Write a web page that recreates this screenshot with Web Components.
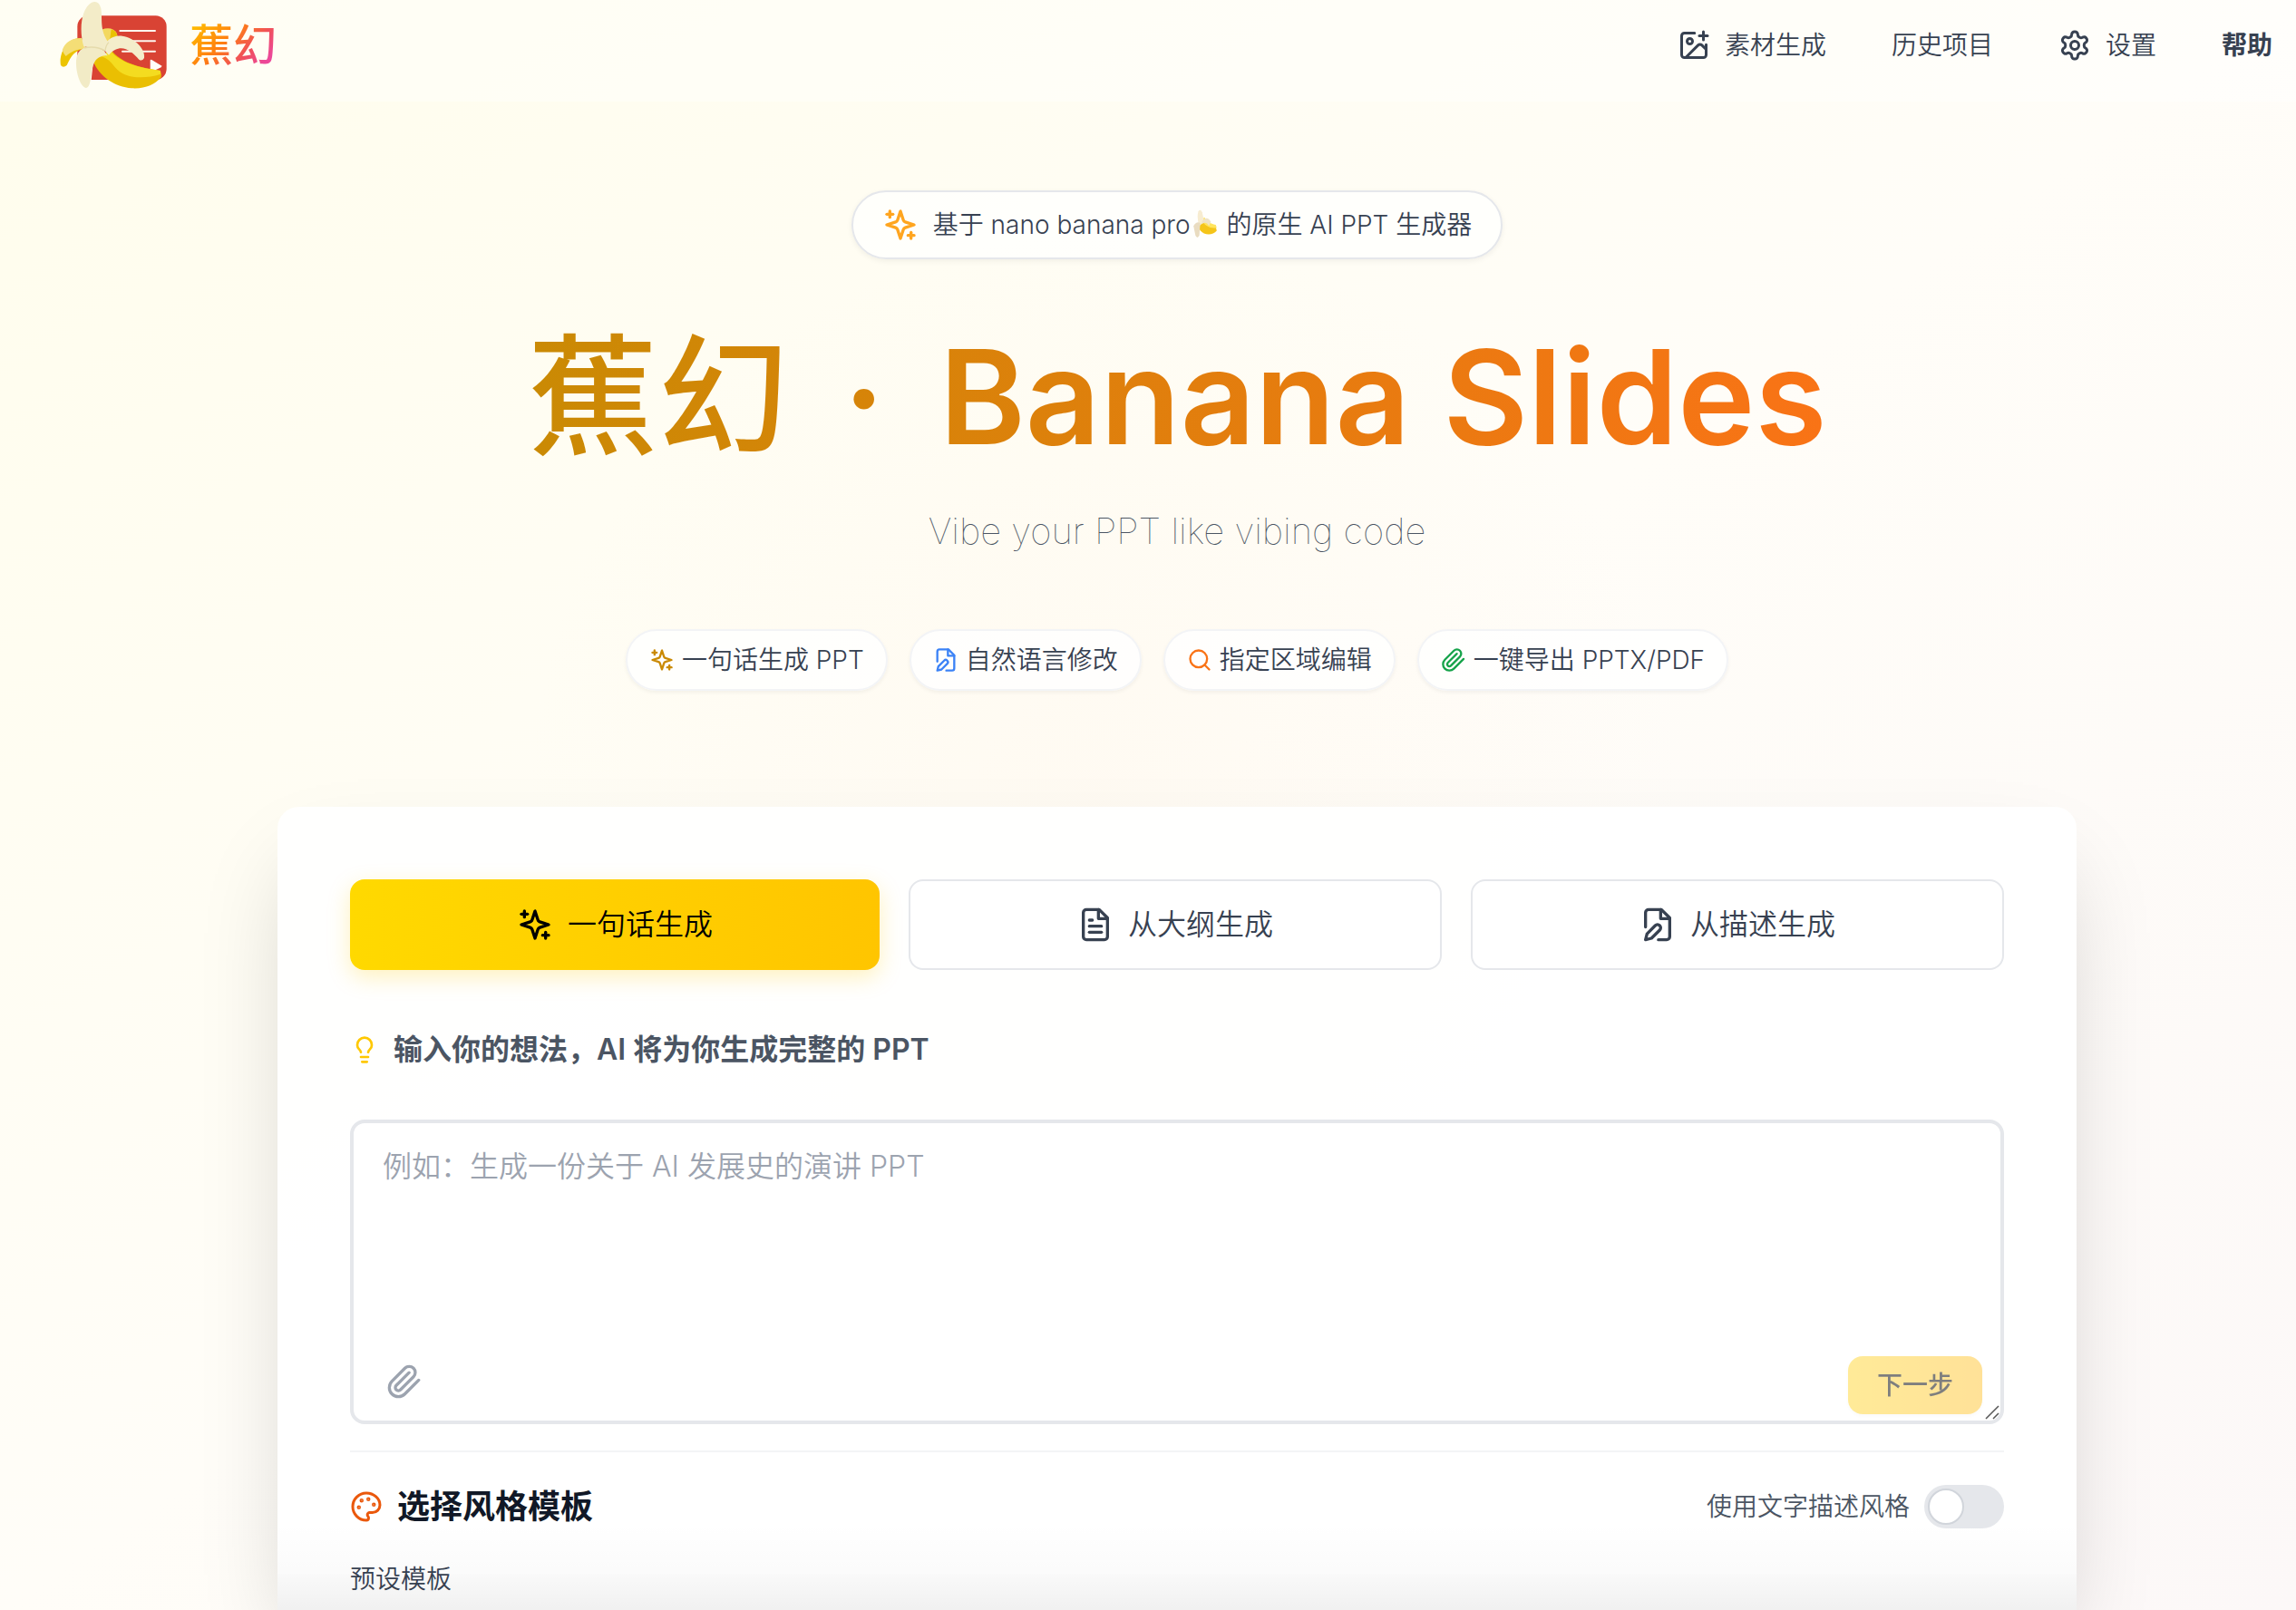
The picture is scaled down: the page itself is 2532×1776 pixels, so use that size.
<!DOCTYPE html>
<html lang="zh-CN">
<head>
<meta charset="UTF-8">
<meta name="viewport" content="width=device-width, initial-scale=1">
<title>蕉幻 · Banana Slides</title>
<style>
  :root {
    --text-primary: #111827;
    --text-secondary: #374151;
    --text-tertiary: #4b5563;
    --border-color: #e5e7eb;
    --border-light: #f3f4f6;
  }

  body {
    margin: 0;
    font-family: Inter, "Noto Sans CJK SC", sans-serif;
    font-size: 28px;
    font-weight: 350;
    line-height: 40px;
    color: var(--text-secondary);
  }
</style>
</head>
<body>
<home-page></home-page>

<script>
// Outline icons on a 24x24 grid
const ICONS = {
  sparkles: '<path d="m12 3-1.912 5.813a2 2 0 0 1-1.275 1.275L3 12l5.813 1.912a2 2 0 0 1 1.275 1.275L12 21l1.912-5.813a2 2 0 0 1 1.275-1.275L21 12l-5.813-1.912a2 2 0 0 1-1.275-1.275L12 3Z"/><path d="M5 3v4"/><path d="M19 17v4"/><path d="M3 5h4"/><path d="M17 19h4"/>',
  imagePlus: '<path d="M16 5h6"/><path d="M19 2v6"/><path d="M21 11.5V19a2 2 0 0 1-2 2H5a2 2 0 0 1-2-2V5a2 2 0 0 1 2-2h7.5"/><path d="m21 15-3.086-3.086a2 2 0 0 0-2.828 0L6 21"/><circle cx="9" cy="9" r="2"/>',
  settings: '<path d="M12.22 2h-.44a2 2 0 0 0-2 2v.18a2 2 0 0 1-1 1.73l-.43.25a2 2 0 0 1-2 0l-.15-.08a2 2 0 0 0-2.73.73l-.22.38a2 2 0 0 0 .73 2.73l.15.1a2 2 0 0 1 1 1.72v.51a2 2 0 0 1-1 1.74l-.15.09a2 2 0 0 0-.73 2.73l.22.38a2 2 0 0 0 2.73.73l.15-.08a2 2 0 0 1 2 0l.43.25a2 2 0 0 1 1 1.73V20a2 2 0 0 0 2 2h.44a2 2 0 0 0 2-2v-.18a2 2 0 0 1 1-1.73l.43-.25a2 2 0 0 1 2 0l.15.08a2 2 0 0 0 2.73-.73l.22-.39a2 2 0 0 0-.73-2.73l-.15-.08a2 2 0 0 1-1-1.74v-.5a2 2 0 0 1 1-1.74l.15-.09a2 2 0 0 0 .73-2.73l-.22-.38a2 2 0 0 0-2.73-.73l-.15.08a2 2 0 0 1-2 0l-.43-.25a2 2 0 0 1-1-1.73V4a2 2 0 0 0-2-2z"/><circle cx="12" cy="12" r="3"/>',
  fileText: '<path d="M14.5 2H6a2 2 0 0 0-2 2v16a2 2 0 0 0 2 2h12a2 2 0 0 0 2-2V7.5L14.5 2z"/><path d="M14 2v6h6"/><path d="M16 13H8"/><path d="M16 17H8"/><path d="M10 9H8"/>',
  fileEdit: '<path d="M4 13.5V4a2 2 0 0 1 2-2h8.5L20 7.5V20a2 2 0 0 1-2 2h-5.5"/><path d="M14 2v6h6"/><path d="M10.42 12.61a2.1 2.1 0 1 1 2.97 2.97L7.95 21 4 22l.99-3.95 5.43-5.44Z"/>',
  search: '<circle cx="11" cy="11" r="8"/><path d="m21 21-4.3-4.3"/>',
  paperclip: '<path d="m21.44 11.05-9.19 9.19a6 6 0 0 1-8.49-8.49l8.57-8.57A4 4 0 1 1 18 8.84l-8.59 8.57a2 2 0 0 1-2.83-2.83l8.49-8.48"/>',
  lightbulb: '<path d="M15 14c.2-1 .7-1.7 1.5-2.5 1-.9 1.5-2.2 1.5-3.5A6 6 0 0 0 6 8c0 1 .2 2.2 1.5 3.5.7.7 1.3 1.5 1.5 2.5"/><path d="M9 18h6"/><path d="M10 22h4"/>',
  palette: '<circle cx="13.5" cy="6.5" r=".5" fill="currentColor"/><circle cx="17.5" cy="10.5" r=".5" fill="currentColor"/><circle cx="8.5" cy="7.5" r=".5" fill="currentColor"/><circle cx="6.5" cy="12.5" r=".5" fill="currentColor"/><path d="M12 2C6.5 2 2 6.5 2 12s4.5 10 10 10c.926 0 1.648-.746 1.648-1.688 0-.437-.18-.835-.437-1.125-.29-.289-.438-.652-.438-1.125a1.64 1.64 0 0 1 1.668-1.668h1.996c3.051 0 5.555-2.503 5.555-5.554C21.965 6.012 17.461 2 12 2z"/>'
};

function define(name, html) {
  customElements.define(name, class extends HTMLElement {
    constructor() {
      super();
      this.attachShadow({ mode: 'open' }).innerHTML = html;
    }
  });
}

class UiIcon extends HTMLElement {
  connectedCallback() {
    if (!this.shadowRoot) this.attachShadow({ mode: 'open' });
    const size = this.getAttribute('size') || 40;
    this.shadowRoot.innerHTML = `
      <style>
        :host { display: block; flex: none; }
        svg { display: block; }
      </style>
      <svg width="${size}" height="${size}" viewBox="0 0 24 24" fill="none" stroke="currentColor"
        stroke-width="2" stroke-linecap="round" stroke-linejoin="round" aria-hidden="true">${ICONS[this.getAttribute('name')]}</svg>
    `;
  }
}
customElements.define('ui-icon', UiIcon);

define('banana-logo', `
  <style>
    :host { display: block; flex: none; }
    svg { display: block; }
  </style>
  <svg width="122" height="100" viewBox="15 0 366 300" role="img" aria-label="Banana Slides">
    <rect x="76" y="52" width="295" height="212" rx="36" fill="#d94334"/>
    <path d="M217 102H333M220 136H333M225 170H333" stroke="#fdf6ee" stroke-width="6" stroke-linecap="round"/>
    <path d="M317 200q0-4 5-2l31 19q4 3 0 6l-30 14q-6 2-6-4z" fill="#fffefa"/>
    <path d="M74 188L130 188L122 266L104 266L74 220z" fill="#fffef5"/>
    <path d="M21 216C14 182 38 122 90 126L104 160C68 166 56 184 41 216Q29 226 21 216z" fill="#ecc400"/>
    <path d="M26 166C36 138 58 126 90 126L104 160C70 164 58 170 38 186Q30 178 26 166z" fill="#f4de76"/>
    <path d="M156 98Q178 90 195 98Q208 106 209 122L184 144L160 136z" fill="#f3d860"/>
    <path d="M188 97Q208 102 208 124L180 146Q186 118 188 97z" fill="#e9c200"/>
    <path d="M128 202C150 176 172 186 188 166C220 206 270 222 349 234Q356 246 353 256C330 282 302 294 256 292C200 288 148 254 128 202z" fill="#eabf02"/>
    <path d="M180 162C210 202 266 224 350 233Q354 240 350 246C296 262 232 262 200 222C182 198 166 188 150 187Q170 184 180 162z" fill="#f4dc20"/>
    <path d="M97 154C80 96 90 28 122 9Q146 -2 154 28C160 62 148 100 180 142L168 166z" fill="#f3ecc8"/>
    <path d="M98 158Q134 150 164 168L176 184C136 184 128 206 121 252C118 276 114 291 104 291C86 286 70 240 72 200Q74 168 98 158z" fill="#f2ebc6"/>
    <path d="M165 166C164 136 190 116 224 119C270 126 302 166 297 192Q290 204 280 197C252 164 216 140 180 182z" fill="#f4edcb"/>
    <path d="M98 159Q136 150 168 168Q170 148 180 140" fill="none" stroke="#e5dbac" stroke-width="4"/>
  </svg>
`);

define('nav-bar', `
  <style>
    :host { display: block; }
    header {
      display: flex;
      align-items: center;
      justify-content: space-between;
      height: 112px;
      padding: 0 26px 0 65px;
      box-sizing: border-box;
      background: rgba(255, 255, 255, 0.4);
    }
    .brand {
      display: flex;
      align-items: center;
      gap: 22px;
      padding-bottom: 12px;
      text-decoration: none;
    }
    .name {
      font-size: 48px;
      font-weight: 500;
      line-height: 56px;
      background: linear-gradient(135deg, #ffb800 10%, #ff8010 40%, #f0505a 65%, #ec4899 85%);
      -webkit-background-clip: text;
      background-clip: text;
      color: transparent;
    }
    nav {
      display: flex;
      gap: 72px;
      padding-bottom: 12px;
    }
    button {
      display: flex;
      align-items: center;
      gap: 16px;
      padding: 0;
      border: 0;
      background: none;
      font: inherit;
      color: #374151;
      cursor: pointer;
    }
    .help { font-weight: 600; }
  </style>
  <header>
    <a class="brand" href="#">
      <banana-logo></banana-logo>
      <span class="name">蕉幻</span>
    </a>
    <nav>
      <button type="button"><ui-icon name="imagePlus" size="36"></ui-icon>素材生成</button>
      <button type="button">历史项目</button>
      <button type="button"><ui-icon name="settings" size="36"></ui-icon>设置</button>
      <button type="button" class="help">帮助</button>
    </nav>
  </header>
`);

define('feature-pill', `
  <style>
    :host {
      display: flex;
      align-items: center;
      gap: 8px;
      padding: 12px 24px;
      border: 2px solid var(--border-light);
      border-radius: 40px;
      background: rgba(255, 255, 255, 0.8);
      box-shadow: 0 2px 4px rgba(0, 0, 0, 0.05);
      white-space: nowrap;
    }
  </style>
  <slot name="icon"></slot>
  <span><slot></slot></span>
`);

define('hero-section', `
  <style>
    :host {
      display: flex;
      flex-direction: column;
      align-items: center;
      text-align: center;
    }
    .badge {
      display: flex;
      align-items: center;
      gap: 16px;
      padding: 16px 32px;
      border: 2px solid var(--border-color);
      border-radius: 40px;
      background: rgba(255, 255, 255, 0.7);
      box-shadow: 0 2px 6px rgba(0, 0, 0, 0.06);
    }
    .emoji {
      width: 28px;
      height: 32px;
      margin: 0 2px;
      vertical-align: -5px;
    }
    h1 {
      margin: 80px 0 0;
      font-size: 144px;
      font-weight: 500;
      line-height: 144px;
      background: linear-gradient(to right, #ca8a04, #f97316);
      -webkit-background-clip: text;
      background-clip: text;
      color: transparent;
    }
    .dot { margin: 0 24px; }
    .latin { font-weight: 600; }
    .subtitle {
      margin: 48px 0 0;
      font-size: 40px;
      font-weight: 100;
      line-height: 56px;
      color: #4b5563;
    }
    .features {
      display: flex;
      flex-wrap: wrap;
      justify-content: center;
      gap: 24px;
      margin-top: 80px;
    }
  </style>
  <div class="badge">
    <ui-icon name="sparkles" size="40" style="color: #ffa51f"></ui-icon>
    <span>基于 nano banana pro<svg class="emoji" viewBox="0 0 26 30" role="img" aria-label="🍌"><path d="M6 18C9 27 20 28 25 22L24 18C18 18 13 15 10 10z" fill="#f5c518"/><path d="M10 12C13 17 18 20 25 19L24 16C18 15 15 12 12 8z" fill="#ffe45c"/><path d="M6 2Q8-1 10 3L12 13L7 17Q4 8 6 2z" fill="#f7ecd0"/><path d="M1 17Q4 12 8 14L7 27Q5 31 3 27z" fill="#e9dcc0"/><path d="M10 12Q15 6 19 13L17 17Q14 12 10 15z" fill="#efe3c4"/></svg> 的原生 AI PPT 生成器</span>
  </div>
  <h1>蕉幻<span class="latin"> <span class="dot">·</span> Banana Slides</span></h1>
  <p class="subtitle">Vibe your PPT like vibing code</p>
  <div class="features">
    <feature-pill><ui-icon slot="icon" name="sparkles" size="28" style="color: #ca8a04"></ui-icon>一句话生成 PPT</feature-pill>
    <feature-pill><ui-icon slot="icon" name="fileEdit" size="28" style="color: #3b82f6"></ui-icon>自然语言修改</feature-pill>
    <feature-pill><ui-icon slot="icon" name="search" size="28" style="color: #f97316"></ui-icon>指定区域编辑</feature-pill>
    <feature-pill><ui-icon slot="icon" name="paperclip" size="28" style="color: #16a34a"></ui-icon>一键导出 PPTX/PDF</feature-pill>
  </div>
`);

define('mode-tabs', `
  <style>
    :host {
      display: flex;
      gap: 32px;
    }
    button {
      flex: 1;
      display: flex;
      align-items: center;
      justify-content: center;
      gap: 16px;
      height: 100px;
      padding: 0;
      border: 2px solid var(--border-color);
      border-radius: 16px;
      background: #fff;
      font: inherit;
      font-size: 32px;
      line-height: 48px;
      color: #374151;
      cursor: pointer;
    }
    .active {
      border: 0;
      background: linear-gradient(to right, #ffd900, #ffc500);
      box-shadow: 0 8px 24px rgba(255, 204, 0, 0.25);
      color: #000;
    }
  </style>
  <button type="button" class="active"><ui-icon name="sparkles"></ui-icon>一句话生成</button>
  <button type="button"><ui-icon name="fileText"></ui-icon>从大纲生成</button>
  <button type="button"><ui-icon name="fileEdit"></ui-icon>从描述生成</button>
`);

define('prompt-box', `
  <style>
    :host {
      display: block;
      position: relative;
    }
    textarea {
      display: block;
      width: 100%;
      height: 336px;
      box-sizing: border-box;
      padding: 24px 32px;
      border: 4px solid var(--border-color);
      border-radius: 16px;
      background: #fff;
      font: inherit;
      font-size: 32px;
      line-height: 48px;
      color: #111827;
      resize: none;
      outline: none;
    }
    textarea::placeholder { color: #9ca3af; opacity: 1; }
    button {
      position: absolute;
      border: 0;
      font: inherit;
    }
    .attach {
      left: 40px;
      bottom: 27px;
      padding: 0;
      background: none;
      color: #9ca3af;
    }
    .next {
      right: 24px;
      bottom: 11px;
      height: 64px;
      padding: 0 32px;
      border-radius: 16px;
      background: linear-gradient(to right, #ffd733, #ffc533);
      box-shadow: 0 2px 4px rgba(0, 0, 0, 0.05);
      font-weight: 500;
      color: #000;
      opacity: 0.5;
    }
    .grip {
      position: absolute;
      right: 5px;
      bottom: 5px;
    }
  </style>
  <textarea aria-label="输入你的想法" placeholder="例如：生成一份关于 AI 发展史的演讲 PPT"></textarea>
  <button type="button" class="attach" aria-label="添加附件"><ui-icon name="paperclip"></ui-icon></button>
  <button type="button" class="next" disabled>下一步</button>
  <svg class="grip" width="16" height="16" fill="none" stroke="#555" stroke-width="1.5" aria-hidden="true"><path d="M1 15L15 1M9 15L15 9"/></svg>
`);

define('toggle-switch', `
  <style>
    :host { display: block; }
    label {
      display: flex;
      align-items: center;
      gap: 16px;
      color: var(--text-tertiary);
      cursor: pointer;
    }
    input {
      appearance: none;
      display: flex;
      align-items: center;
      width: 88px;
      height: 48px;
      margin: 0;
      padding: 0 4px;
      box-sizing: border-box;
      border-radius: 24px;
      background: #e5e7eb;
    }
    input::before {
      content: "";
      width: 40px;
      height: 40px;
      box-sizing: border-box;
      border: 2px solid #d1d5db;
      border-radius: 50%;
      background: #fff;
    }
    input:checked { justify-content: flex-end; background: #ffd700; }
  </style>
  <label><slot></slot><input type="checkbox" role="switch" aria-label="使用文字描述风格"></label>
`);

define('create-card', `
  <style>
    :host {
      display: block;
      padding: 80px 80px 0;
      border-radius: 24px 24px 0 0;
      background:
        linear-gradient(to top, rgba(0, 0, 0, 0.06), rgba(0, 0, 0, 0.02) 40px, transparent 96px),
        rgba(255, 255, 255, 0.9);
      box-shadow: 0 50px 100px -24px rgba(0, 0, 0, 0.2);
    }
    .hint {
      display: flex;
      align-items: center;
      gap: 16px;
      margin: 64px 0 53px;
      font-size: 32px;
      font-weight: 600;
      line-height: 48px;
      color: var(--text-tertiary);
    }
    .templates {
      margin-top: 29px;
      padding-top: 36px;
      border-top: 2px solid var(--border-light);
    }
    .row {
      display: flex;
      align-items: center;
      justify-content: space-between;
    }
    h3 {
      display: flex;
      align-items: center;
      gap: 16px;
      margin: 0;
      font-size: 36px;
      font-weight: 600;
      line-height: 48px;
      color: var(--text-primary);
    }
    h4 {
      margin: 36px 0 0;
      padding-bottom: 14px;
      font-size: 28px;
      font-weight: inherit;
      color: var(--text-secondary);
    }
  </style>
  <mode-tabs></mode-tabs>
  <p class="hint"><ui-icon name="lightbulb" size="32" style="color: #ffc800"></ui-icon><span>输入你的想法，AI 将为你生成完整的 PPT</span></p>
  <prompt-box></prompt-box>
  <section class="templates">
    <div class="row">
      <h3><ui-icon name="palette" size="36" style="color: #ea580c"></ui-icon>选择风格模板</h3>
      <toggle-switch>使用文字描述风格</toggle-switch>
    </div>
    <h4>预设模板</h4>
  </section>
`);

define('home-page', `
  <style>
    :host {
      display: flex;
      flex-direction: column;
      min-height: 100vh;
      background:
        radial-gradient(circle at 48% 50%, rgba(255, 240, 220, 0.2), transparent 40%),
        linear-gradient(to bottom right, #fffdec, #fffdf8 50%, #fcf8f8);
    }
    main {
      flex: 1;
      display: flex;
      flex-direction: column;
      padding: 98px 242px 0 306px;
    }
    create-card {
      flex: 1;
      margin-top: 128px;
    }
  </style>
  <nav-bar></nav-bar>
  <main>
    <hero-section></hero-section>
    <create-card></create-card>
  </main>
`);
</script>
</body>
</html>
